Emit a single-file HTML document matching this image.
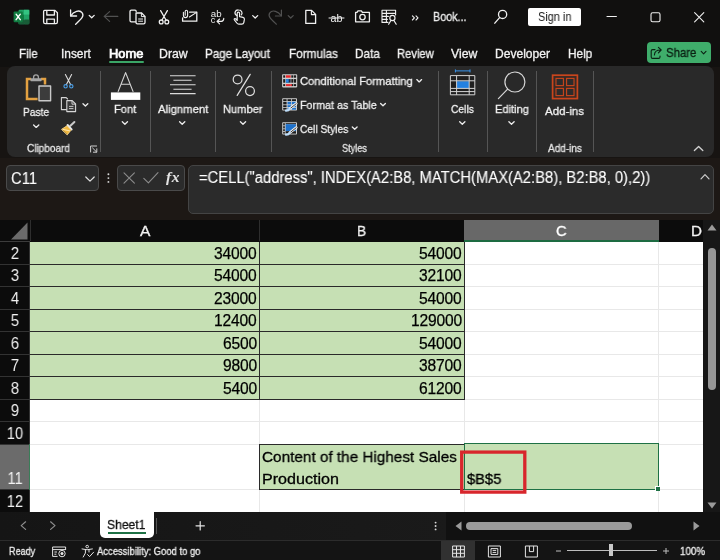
<!DOCTYPE html>
<html><head><meta charset="utf-8"><title>Excel</title>
<style>
*{box-sizing:border-box;margin:0;padding:0}
html,body{width:720px;height:560px;overflow:hidden;background:#171412;font-family:"Liberation Sans",sans-serif;color:#fff}
.a{position:absolute}
.t{position:absolute;white-space:nowrap;line-height:1;will-change:transform}
.tx{transform-origin:0 50%;-webkit-text-stroke:0.3px currentColor}
svg{position:absolute;overflow:visible}
#title{left:0;top:0;width:720px;height:67px;background:#11100f}
#ribbon{left:6.8px;top:66.4px;width:707.2px;height:91px;background:#292929;border-radius:8px}
#fbar{left:0;top:158px;width:720px;height:62px;background:#1d1815}
.sep{position:absolute;width:1px;background:#555;top:71px;height:81px}
.rh{position:absolute;left:0;width:30px;background:#0c0c0c;border-bottom:1px solid #333;border-right:1px solid #333}
.rn{left:0;width:30px;text-align:center;font-size:16px;color:#f2f2f2;transform:scaleX(.915)}
.gc{background:#c6e0b4;border-right:1px solid #2a2a2a;border-bottom:1px solid #2a2a2a}
.nm{font-size:15.6px;color:#000;letter-spacing:-0.15px;-webkit-text-stroke:0.25px #000}
</style></head><body>
<div class="a" id="title"></div>
<div class="a" id="ribbon"></div>
<div class="a" id="fbar"></div>

<!-- title bar widgets -->
<div class="a" style="left:528px;top:8px;width:53px;height:18px;background:#fff;border-radius:2px"></div>
<div class="a" style="left:109px;top:61.4px;width:34.6px;height:2px;background:#3aa566;border-radius:1px"></div>
<div class="a" style="left:647px;top:41.5px;width:63.6px;height:21.6px;background:#3fad6b;border-radius:4px"></div>

<!-- ribbon separators -->
<div class="sep" style="left:100px"></div>
<div class="sep" style="left:150px"></div>
<div class="sep" style="left:215px"></div>
<div class="sep" style="left:271px"></div>
<div class="sep" style="left:438px"></div>
<div class="sep" style="left:487px"></div>
<div class="sep" style="left:536px"></div>
<div class="sep" style="left:593px"></div>

<!-- formula bar boxes -->
<div class="a" style="left:6px;top:165px;width:93px;height:26px;background:#2b2b2b;border:1px solid #4a4a4a;border-radius:4px"></div>
<div class="a" style="left:117px;top:165px;width:68px;height:26px;background:#2b2b2b;border:1px solid #4a4a4a;border-radius:4px"></div>
<div class="a" style="left:188px;top:165px;width:526px;height:48.6px;background:#2b2b2b;border:1px solid #444;border-radius:5px"></div>
<div class="t" style="left:166.4px;top:169.4px;font-size:15.5px;color:#e4e4e4;font-family:'Liberation Serif',serif;font-style:italic;font-weight:bold;letter-spacing:0.6px">fx</div>

<!-- grid -->
<div class="a" style="left:0;top:220px;width:720px;height:292px;background:#fff"></div>
<div class="a" style="left:0;top:219.5px;width:720px;height:22.5px;background:#0c0c0c"></div>
<div class="a" style="left:0;top:241px;width:30px;height:1px;background:#3c3c3c"></div>
<div class="a" style="left:30px;top:220px;width:1px;height:21px;background:#2e2e2e"></div>
<div class="a" style="left:259px;top:220px;width:1px;height:21px;background:#2e2e2e"></div>
<div class="a" style="left:464px;top:219.5px;width:194.5px;height:21px;background:#686868"></div>
<div class="a" style="left:464px;top:240.4px;width:194.5px;height:1.6px;background:#1d6b41"></div>
<svg style="left:11px;top:222px" width="17" height="18"><path d="M16.5 0.5 L16.5 17.5 L0 17.5Z" fill="#6b6b6b"/></svg>
<div class="rh" style="top:242px;height:23px;background:#0c0c0c"></div>
<div class="t rn" style="top:245.5px">2</div>
<div class="rh" style="top:265px;height:22px;background:#0c0c0c"></div>
<div class="t rn" style="top:267.5px">3</div>
<div class="rh" style="top:287px;height:23px;background:#0c0c0c"></div>
<div class="t rn" style="top:290.5px">4</div>
<div class="rh" style="top:310px;height:22px;background:#0c0c0c"></div>
<div class="t rn" style="top:312.5px">5</div>
<div class="rh" style="top:332px;height:23px;background:#0c0c0c"></div>
<div class="t rn" style="top:335.5px">6</div>
<div class="rh" style="top:355px;height:22px;background:#0c0c0c"></div>
<div class="t rn" style="top:357.5px">7</div>
<div class="rh" style="top:377px;height:23px;background:#0c0c0c"></div>
<div class="t rn" style="top:380.5px">8</div>
<div class="rh" style="top:400px;height:22px;background:#0c0c0c"></div>
<div class="t rn" style="top:402.5px">9</div>
<div class="rh" style="top:422px;height:23px;background:#0c0c0c"></div>
<div class="t rn" style="top:425.5px">10</div>
<div class="rh" style="top:445px;height:45px;background:#6b6b6b"></div>
<div class="t rn" style="top:470.5px">11</div>
<div class="rh" style="top:490px;height:23px;background:#0c0c0c"></div>
<div class="t rn" style="top:493.5px">12</div>
<div class="a" style="left:30px;top:264px;width:673px;height:1px;background:#e8e8e8"></div>
<div class="a" style="left:30px;top:286px;width:673px;height:1px;background:#e8e8e8"></div>
<div class="a" style="left:30px;top:309px;width:673px;height:1px;background:#e8e8e8"></div>
<div class="a" style="left:30px;top:331px;width:673px;height:1px;background:#e8e8e8"></div>
<div class="a" style="left:30px;top:354px;width:673px;height:1px;background:#e8e8e8"></div>
<div class="a" style="left:30px;top:376px;width:673px;height:1px;background:#e8e8e8"></div>
<div class="a" style="left:30px;top:399px;width:673px;height:1px;background:#e8e8e8"></div>
<div class="a" style="left:30px;top:421px;width:673px;height:1px;background:#e8e8e8"></div>
<div class="a" style="left:30px;top:444px;width:673px;height:1px;background:#e8e8e8"></div>
<div class="a" style="left:30px;top:489px;width:673px;height:1px;background:#e8e8e8"></div>
<div class="a" style="left:259px;top:242px;width:1px;height:270px;background:#e8e8e8"></div>
<div class="a" style="left:464px;top:242px;width:1px;height:270px;background:#e8e8e8"></div>
<div class="a" style="left:658px;top:242px;width:1px;height:270px;background:#e8e8e8"></div>
<div class="a gc" style="left:30px;top:242px;width:230px;height:23px"></div>
<div class="a gc" style="left:260px;top:242px;width:205px;height:23px"></div>
<div class="t nm" style="right:463.2px;top:245.6px">34000</div>
<div class="t nm" style="right:258.2px;top:245.6px">54000</div>
<div class="a gc" style="left:30px;top:265px;width:230px;height:22px"></div>
<div class="a gc" style="left:260px;top:265px;width:205px;height:22px"></div>
<div class="t nm" style="right:463.2px;top:267.6px">54000</div>
<div class="t nm" style="right:258.2px;top:267.6px">32100</div>
<div class="a gc" style="left:30px;top:287px;width:230px;height:23px"></div>
<div class="a gc" style="left:260px;top:287px;width:205px;height:23px"></div>
<div class="t nm" style="right:463.2px;top:290.6px">23000</div>
<div class="t nm" style="right:258.2px;top:290.6px">54000</div>
<div class="a gc" style="left:30px;top:310px;width:230px;height:22px"></div>
<div class="a gc" style="left:260px;top:310px;width:205px;height:22px"></div>
<div class="t nm" style="right:463.2px;top:312.6px">12400</div>
<div class="t nm" style="right:258.2px;top:312.6px">129000</div>
<div class="a gc" style="left:30px;top:332px;width:230px;height:23px"></div>
<div class="a gc" style="left:260px;top:332px;width:205px;height:23px"></div>
<div class="t nm" style="right:463.2px;top:335.6px">6500</div>
<div class="t nm" style="right:258.2px;top:335.6px">54000</div>
<div class="a gc" style="left:30px;top:355px;width:230px;height:22px"></div>
<div class="a gc" style="left:260px;top:355px;width:205px;height:22px"></div>
<div class="t nm" style="right:463.2px;top:357.6px">9800</div>
<div class="t nm" style="right:258.2px;top:357.6px">38700</div>
<div class="a gc" style="left:30px;top:377px;width:230px;height:23px"></div>
<div class="a gc" style="left:260px;top:377px;width:205px;height:23px"></div>
<div class="t nm" style="right:463.2px;top:380.6px">5400</div>
<div class="t nm" style="right:258.2px;top:380.6px">61200</div>
<!-- row 11 cells -->
<div class="a" style="left:259px;top:444px;width:206px;height:46px;background:#c6e0b4;border:1px solid #2a2a2a"></div>
<div class="a" style="left:464px;top:443px;width:195px;height:47px;background:#c6e0b4;border:1px solid #1e7145"></div>
<div class="a" style="left:655px;top:486px;width:5px;height:5px;background:#1e7145;border:1px solid #fff;border-right:0;border-bottom:0"></div>
<svg style="left:0;top:0" width="720" height="560"><rect x="461.7" y="452.1" width="63.1" height="40" fill="none" stroke="#d8262c" stroke-width="3.3"/></svg>
<div class="a" style="left:29px;top:444px;width:1px;height:46px;background:#3a7d58"></div>
<!-- right scrollbar -->
<div class="a" style="left:703px;top:220px;width:17px;height:292px;background:#171717"></div>
<div class="a" style="left:708px;top:248px;width:8px;height:142px;background:#969696;border-radius:4px"></div>
<svg style="left:707px;top:224px" width="10" height="7"><path d="M0.5 6.5 L5 0.5 L9.5 6.5Z" fill="#9a9a9a"/></svg>
<svg style="left:707px;top:502px" width="10" height="7"><path d="M0.5 0.5 L5 6.5 L9.5 0.5Z" fill="#9a9a9a"/></svg>

<!-- bottom bars -->
<div class="a" style="left:0;top:512px;width:720px;height:28px;background:linear-gradient(to right,#151515,#1d1d1d)"></div>
<div class="a" style="left:0;top:540px;width:720px;height:20px;background:#141414;border-top:1px solid #2c2c2c"></div>
<div class="a" style="left:100px;top:512px;width:53.6px;height:25.8px;background:#fff;border-radius:0 0 5px 5px"></div>
<div class="a" style="left:108px;top:532px;width:38px;height:2px;background:#1e7145"></div>
<div class="a" style="left:156px;top:518px;width:1px;height:16px;background:#555"></div>
<!-- h scrollbar -->
<div class="a" style="left:446px;top:512px;width:274px;height:28px;background:#111"></div>
<div class="a" style="left:466px;top:522px;width:166px;height:8.4px;background:#9a9a9a;border-radius:4.2px"></div>
<svg style="left:455px;top:521px" width="7" height="10"><path d="M6.5 0.5 L0.5 5 L6.5 9.5Z" fill="#9a9a9a"/></svg>
<svg style="left:693px;top:521px" width="7" height="10"><path d="M0.5 0.5 L6.5 5 L0.5 9.5Z" fill="#9a9a9a"/></svg>
<!-- view buttons / zoom -->
<div class="a" style="left:441px;top:540px;width:34px;height:19px;top:541px;background:#313131"></div>
<div class="a" style="left:567px;top:550px;width:90px;height:1px;background:#bdbdbd"></div>
<div class="a" style="left:609px;top:544px;width:4px;height:12px;background:#c8c8c8"></div>
<svg style="left:0;top:0" width="720" height="560" viewBox="0 0 720 560" fill="none" stroke-linecap="round" stroke-linejoin="round">
<!-- ===== Title bar (QAT) ===== -->
<g id="xl">
<rect x="18.5" y="9.8" width="10.8" height="14.4" rx="1.2" fill="#21a366" stroke="none"/>
<rect x="24" y="9.8" width="5.3" height="4.8" fill="#33c481" stroke="none"/>
<rect x="18.5" y="14.6" width="5.5" height="4.8" fill="#107c41" stroke="none"/>
<rect x="24" y="19.4" width="5.3" height="4.8" rx="1" fill="#185c37" stroke="none"/>
<rect x="18.5" y="19.4" width="5.5" height="4.8" fill="#185c37" stroke="none"/>
<rect x="13.6" y="11.6" width="9.2" height="10.6" rx="1" fill="#107c41" stroke="none"/>
<path d="M16.1 14.2 L20.3 19.7 M20.3 14.2 L16.1 19.7" stroke="#fff" stroke-width="1.4"/>
</g>
<g stroke="#f0f0f0" stroke-width="1.3">
<!-- save -->
<path d="M44.6 10.4 H55 L57.4 12.8 V22 Q57.4 23.6 55.8 23.6 H45.2 Q43.6 23.6 43.6 22 V11.4 Q43.6 10.4 44.6 10.4Z"/>
<path d="M46.8 10.6 V15 H54.4 V10.6"/>
<path d="M46.8 23.4 V19.2 H54.4 V23.4"/>
<!-- undo -->
<path d="M70.6 10 V16 H76.6"/>
<path d="M70.8 15.8 C73.5 11.5 79.5 9.2 82.2 12.8 C84.6 16.2 81 19.2 75.6 24.2"/>
<path d="M89.2 15.4 L91.7 17.8 L94.2 15.4"/>
<!-- copy -->
<path d="M135.6 21.8 H131.4 Q130 21.8 130 20.4 V11.6 Q130 10.2 131.4 10.2 H135 Q136.2 10.2 136.2 11.6"/>
<path d="M136 13 H141.6 L145 16.4 V22.4 Q145 23.8 143.6 23.8 H137.4 Q136 23.8 136 22.4Z"/>
<path d="M141.4 13.2 V16.6 H144.8" stroke-width="1"/>
<path d="M138.6 19 H142.6 M138.6 21.2 H142.6" stroke-width="1"/>
<!-- scissors -->
<path d="M160.6 10.6 L166 20 M167.4 10.6 L162 20"/>
<circle cx="161.2" cy="21.9" r="1.9"/><circle cx="166.8" cy="21.9" r="1.9"/>
<!-- mail attach -->
<path d="M189.6 12.2 H196.8 V21.2 H182.6 V18"/>
<path d="M189.4 17 L196.6 12.4" stroke-width="1.1"/>
<path d="M183.4 12.2 V15.6 Q183.4 17.6 185.4 17.6 Q187.6 17.6 187.6 15.6 V11.6 Q187.6 10.2 186.3 10.2 Q185.2 10.2 185.2 11.6 V15.2" stroke-width="1.1"/>
<!-- touch -->
<path d="M236.8 15.6 C233.6 13.6 235 9.8 238.4 9.9 C241.8 9.9 242.8 13 241.4 14.8" stroke-width="1.2"/>
<path d="M237.2 20.4 V13.4 Q237.2 12.2 238.4 12.2 Q239.6 12.2 239.6 13.4 V16.6 L243 17.4 Q244.6 17.8 244.4 19.4 L243.8 22.6 Q243.4 24.2 241.8 24.2 H238.8 Q237.6 24.2 236.8 23 L234.4 19.8 Q233.8 18.8 235 18.6 Q236 18.6 237.2 20.4" stroke-width="1.2"/>
<path d="M252.7 15.6 L255.2 18 L257.7 15.6"/>
<!-- new doc -->
<path d="M305.8 10.4 H311.6 L315.6 14.4 V23.4 H305.8Z"/>
<path d="M311.4 10.6 V14.6 H315.4" stroke-width="1.1"/>
<!-- camera -->
<path d="M355.6 12.4 H357 L358 10.8 H361.4 L362.4 12.4 H369.4 V21.8 H355.6Z"/>
<circle cx="362.5" cy="17.1" r="2.7"/>
<!-- table search -->
<path d="M382 10.2 H395.6 V15 M382 10.2 V22.4 H388 M382 13.4 H395.6 M382 16.4 H388.4 M382 19.4 H387.4 M386.4 10.4 V22.2" stroke-width="1.1"/>
<circle cx="392.4" cy="18" r="2.6" stroke-width="1.2"/>
<path d="M388.6 24.2 L390.6 21 M396.2 24.2 L394.2 21" stroke-width="1.2"/>
<!-- overflow -->
<path d="M412.4 15.8 L414.4 17.9 L412.4 20 M416 15.8 L418 17.9 L416 20" stroke-width="1.1"/>
<!-- search -->
<circle cx="502.6" cy="14.4" r="4.1"/>
<path d="M499.6 17.6 L494.8 23.2"/>
<!-- window controls -->
<path d="M607 16.5 H616.4" stroke-width="1.1"/>
<rect x="651" y="12.8" width="9" height="9" rx="1.6" stroke-width="1.1"/>
<path d="M694.6 12.6 L703.8 21.8 M703.8 12.6 L694.6 21.8" stroke-width="1.1"/>
</g>
<!-- ab replace / strike -->
<g stroke="none" fill="#f0f0f0" font-family="Liberation Sans, sans-serif">
<text x="210.8" y="16.8" font-size="8.6" textLength="10.8" lengthAdjust="spacingAndGlyphs">ab</text>
<text x="210.8" y="23.4" font-size="8.6" textLength="4.6" lengthAdjust="spacingAndGlyphs">c</text>
<text x="330.4" y="22" font-size="11.5" textLength="12" lengthAdjust="spacingAndGlyphs">ab</text>
</g>
<g stroke="#f0f0f0" stroke-width="1.1">
<path d="M217.2 21.4 H221.4 Q223.6 21.2 223.8 18.4 M219.6 19 L217 21.4 L219.6 23.8"/>
<path d="M329 18 H344" stroke-width="1"/>
</g>
<!-- dim icons -->
<g stroke="#515151" stroke-width="1.2">
<path d="M104.2 16.4 H117.8 M109.6 11.6 L104.2 16.4 L109.6 21.4"/>
<path d="M281.4 10 V16 H275.4"/>
<path d="M281.2 15.8 C278.5 11.5 272.5 9.2 269.8 12.8 C267.4 16.2 271 19.2 276.4 24.2"/>
<path d="M288.2 15.6 L290.7 18 L293.2 15.6"/>
</g>
<!-- share icon -->
<g stroke="#0b2013" stroke-width="1.1">
<path d="M655 49.6 H652.6 Q651.2 49.6 651.2 51 V57 Q651.2 58.4 652.6 58.4 H658.6 Q660 58.4 660 57 V56"/>
<path d="M654.4 55 C654.6 51.6 657 50 660.4 50 M658.4 47.4 L661.2 50 L658.4 52.8"/>
<path d="M701.2 51.4 L703.6 53.8 L706 51.4"/>
</g>

<!-- ===== Ribbon icons ===== -->
<!-- paste -->
<g>
<path d="M31 79 H27 V99 H37.6" stroke="#e3a141" stroke-width="2.5" stroke-linecap="butt" stroke-linejoin="miter"/>
<path d="M41 79 H45 V84.4" stroke="#e3a141" stroke-width="2.5" stroke-linecap="butt" stroke-linejoin="miter"/>
<rect x="30.4" y="78.2" width="11.2" height="3" rx="0.6" fill="#a6a6a6"/><path d="M33.6 78.4 V77.2 Q33.6 74.8 36 74.8 Q38.4 74.8 38.4 77.2 V78.4" stroke="#a6a6a6" stroke-width="1.3"/>
<rect x="39" y="86" width="11.6" height="14.8" fill="#3c3c3c" stroke="#c9c9c9" stroke-width="1.4"/>
</g>
<g stroke="#ececec" stroke-width="1.35">
<path d="M33.6 125 L36.2 127.4 L38.8 125"/>
<path d="M122.3 121.8 L124.9 124.2 L127.5 121.8"/>
<path d="M179.6 121.8 L182.2 124.2 L184.8 121.8"/>
<path d="M240.4 121.8 L243 124.2 L245.6 121.8"/>
<path d="M459.7 121.8 L462.3 124.2 L464.9 121.8"/>
<path d="M508.9 121.8 L511.5 124.2 L514.1 121.8"/>
<path d="M83 103.8 L85.4 106.1 L87.8 103.8"/>
<path d="M416.8 79.6 L419.2 81.9 L421.6 79.6"/>
<path d="M380.6 103.4 L383 105.7 L385.4 103.4"/>
<path d="M352.3 127 L354.7 129.3 L357.1 127"/>
<path d="M694.4 150.6 L698.6 146.4 L702.8 150.6" stroke="#cfcfcf"/>
</g>
<!-- ribbon scissors -->
<g stroke-width="1.1">
<path d="M65.4 74.6 L70.6 84.6 M71.6 74.6 L66.4 84.6" stroke="#dcdcdc"/>
<circle cx="65.6" cy="86.3" r="1.7" stroke="#4a9ee6"/><circle cx="71.3" cy="86.3" r="1.7" stroke="#4a9ee6"/>
</g>
<!-- ribbon copy -->
<g stroke="#d6d6d6" stroke-width="1.1">
<path d="M66.6 109.6 H61.4 V97.6 H66.2 L67.6 99"/>
<path d="M66.8 100.6 H72.2 L75.6 104 V111.6 H66.8Z" fill="#3a3a3a"/>
<path d="M72 100.8 V104.2 H75.4" stroke-width="0.9"/>
<path d="M69.4 106.4 H73 M69.4 108.6 H73" stroke-width="0.9"/>
</g>
<!-- format painter -->
<g>
<path d="M70.4 125.8 L74.4 122" stroke="#c9c9c9" stroke-width="2"/>
<path d="M67.6 125 L71.6 129.4" stroke="#e6e6e6" stroke-width="2"/>
<path d="M61.8 129.2 L67 125.8 L71 130.2 L67.4 134.6Z" fill="#f2b93f" stroke="#f7d68a" stroke-width="0.9"/>
<path d="M63 129.4 L69.6 130.8" stroke="#fff3d0" stroke-width="0.8"/>
</g>
<!-- dialog launcher -->
<g stroke="#cfcfcf" stroke-width="1">
<path d="M96.6 146 H90.6 V152"/>
<path d="M92.6 148 L96.6 152 M96.8 148.8 V152.2 H93.4"/>
</g>
<!-- font -->
<g>
<path d="M118.2 91.4 L125.6 72.6 L133 91.4 M121.2 84.2 H130" stroke="#d4d4d4" stroke-width="1.15"/>
<rect x="110.9" y="92.4" width="29.4" height="7.5" fill="#fff"/>
</g>
<!-- alignment -->
<g stroke="#dadada" stroke-width="1.05" stroke-linecap="butt">
<path d="M170 75.8 H195.6 M173.4 80.2 H191.6 M170 84.7 H195.6 M173.4 89.2 H191.6 M170 93.6 H195.6"/>
</g>
<!-- percent -->
<g stroke="#dddddd" stroke-width="1.25">
<circle cx="237.6" cy="79.4" r="4.4"/><circle cx="250" cy="91.1" r="4.4"/>
<path d="M250.2 74.4 L237.2 95.4"/>
</g>
<!-- conditional formatting -->
<g stroke="none">
<rect x="282.1" y="74.2" width="15.1" height="13.2" rx="0.8" fill="#cfcfcf"/>
<rect x="283.2" y="75.3" width="1.9" height="2.4" fill="#1c1c1c"/>
<rect x="285.8" y="75.3" width="4.9" height="2.4" fill="#e8282c"/>
<rect x="291.3" y="75.3" width="2.0" height="2.4" fill="#1c1c1c"/>
<rect x="293.9" y="75.3" width="2.2" height="2.4" fill="#1c1c1c"/>
<rect x="283.2" y="79.1" width="1.9" height="3.6" fill="#1c1c1c"/>
<rect x="285.8" y="79.1" width="4.9" height="3.6" fill="#1f2a44"/>
<rect x="291.3" y="79.1" width="2.0" height="3.6" fill="#1c1c1c"/>
<rect x="293.9" y="79.1" width="2.2" height="3.6" fill="#1c1c1c"/>
<rect x="283.2" y="84.1" width="1.9" height="2.0" fill="#1c1c1c"/>
<rect x="285.8" y="84.1" width="4.9" height="2.0" fill="#e8282c"/>
<rect x="291.3" y="84.1" width="2.0" height="2.0" fill="#1c1c1c"/>
<rect x="293.9" y="84.1" width="2.2" height="2.0" fill="#1c1c1c"/>
<rect x="285.8" y="79.1" width="2.9" height="3.6" fill="#2a86e0"/>
<rect x="290.7" y="84.1" width="1.2" height="2" fill="#e8282c"/>
</g>
<!-- format as table -->
<g stroke="none">
<rect x="282.2" y="98.2" width="14.8" height="12.4" rx="0.8" fill="#cfcfcf"/>
<rect x="283.2" y="99.2" width="3.4" height="1.8" fill="#1c1c1c"/>
<rect x="287.5" y="99.2" width="3.7" height="1.8" fill="#1c1c1c"/>
<rect x="292" y="99.2" width="4.0" height="1.8" fill="#1c1c1c"/>
<rect x="283.2" y="101.8" width="3.4" height="2.6" fill="#1c1c1c"/>
<rect x="287.5" y="101.8" width="3.7" height="2.6" fill="#1f72cc"/>
<rect x="292" y="101.8" width="4.0" height="2.6" fill="#1f72cc"/>
<rect x="283.2" y="105.2" width="3.4" height="2.0" fill="#1c1c1c"/>
<rect x="287.5" y="105.2" width="3.7" height="2.0" fill="#1f72cc"/>
<rect x="292" y="105.2" width="4.0" height="2.0" fill="#1f72cc"/>
<rect x="283.2" y="108" width="3.4" height="1.7" fill="#1c1c1c"/>
<rect x="287.5" y="108" width="3.7" height="1.7" fill="#1f72cc"/>
<rect x="292" y="108" width="4.0" height="1.7" fill="#1f72cc"/>
</g>
<path d="M296.3 103.6 L290 108.6" stroke="#f2f2f2" stroke-width="2.6" stroke-linecap="round"/>
<path d="M296.1 103.8 L290.6 108.2" stroke="#2a2a2a" stroke-width="0.9" stroke-linecap="round"/>
<path d="M289.6 108.8 Q288.6 110.8 286 110.7" stroke="#bcdcf8" stroke-width="2.2" stroke-linecap="round"/>
<!-- cell styles -->
<g stroke="none">
<rect x="282.2" y="122.2" width="14.8" height="12.4" rx="0.8" fill="#cfcfcf"/>
<rect x="283.2" y="123.2" width="1.6" height="2.2" fill="#1c1c1c"/>
<rect x="283.2" y="126.2" width="1.6" height="2.2" fill="#1c1c1c"/>
<rect x="283.2" y="129.2" width="1.6" height="2.0" fill="#1c1c1c"/>
<rect x="283.2" y="132" width="1.6" height="1.6" fill="#1c1c1c"/>
<rect x="285.6" y="123.2" width="10.4" height="1" fill="#1c1c1c"/>
<rect x="285.6" y="124.2" width="10.4" height="7" fill="#1f72cc"/>
<rect x="285.6" y="131.2" width="10.4" height="2.4" fill="#1c1c1c"/>
</g>
<path d="M296.3 127.6 L290 132.6" stroke="#f2f2f2" stroke-width="2.6" stroke-linecap="round"/>
<path d="M296.1 127.8 L290.6 132.2" stroke="#2a2a2a" stroke-width="0.9" stroke-linecap="round"/>
<path d="M289.6 132.8 Q288.6 134.8 286 134.7" stroke="#bcdcf8" stroke-width="2.2" stroke-linecap="round"/>
<!-- cells -->
<g stroke-linecap="butt" stroke-linejoin="miter">
<rect x="456.8" y="81.2" width="12.2" height="7" fill="#2481e0"/>
<path d="M450.4 75.6 H474.8 V94.8 H450.4Z" fill="#1f1f1f" stroke="none"/>
<rect x="456.8" y="81.2" width="12.2" height="7" fill="#2481e0"/>
<path d="M450.4 75.6 H474.8 V94.8 H450.4Z M450.4 80.8 H474.8 M450.4 88.4 H474.8 M450.4 91.6 H474.8 M456.6 75.6 V94.8 M469.2 75.6 V94.8" stroke="#d4d4d4" stroke-width="1"/>
<path d="M455.4 70.9 H470 M455.4 69.4 V72.4 M470 69.4 V72.4" stroke="#3a94ea" stroke-width="1"/>
</g>
<!-- editing -->
<g stroke="#d6d6d6" stroke-width="1.2">
<circle cx="514.9" cy="82" r="10"/>
<path d="M507.6 89.2 L498.4 98.6"/>
</g>
<!-- add-ins -->
<g stroke="#c9461d" stroke-linecap="butt" stroke-linejoin="miter">
<rect x="552.6" y="75.2" width="24.8" height="23.4" stroke-width="1.7" fill="#3a2a24"/>
<rect x="556" y="78.4" width="7.4" height="7.2" stroke-width="1.1" fill="#2c2c2c"/>
<rect x="566.6" y="78.4" width="7.4" height="7.2" stroke-width="1.1" fill="#2c2c2c"/>
<rect x="556" y="88.4" width="7.4" height="7.2" stroke-width="1.1" fill="#2c2c2c"/>
<rect x="566.6" y="88.4" width="7.4" height="7.2" stroke-width="1.1" fill="#2c2c2c"/>
</g>

<!-- ===== Formula bar icons ===== -->
<g stroke="#e0e0e0" stroke-width="1.2">
<path d="M85.8 177 L90 181.2 L94.2 177"/>
<path d="M701 178.8 L705 174.6 L709 178.8" stroke="#cfcfcf"/>
</g>
<g fill="#d8d8d8" stroke="none">
<circle cx="108.4" cy="174.3" r="0.95"/><circle cx="108.4" cy="178.1" r="0.95"/><circle cx="108.4" cy="181.9" r="0.95"/>
</g>
<g stroke="#8c8c8c" stroke-width="1.1">
<path d="M124 172.8 L134.4 183.2 M134.4 172.8 L124 183.2"/>
<path d="M143.8 178.4 L148.4 182.8 L158 172.6"/>
</g>
<!-- ===== Sheet tab bar ===== -->
<g stroke="#8e8e8e" stroke-width="1.2">
<path d="M25.6 521.8 L21.2 525.6 L25.6 529.4"/>
<path d="M50.6 521.8 L55 525.6 L50.6 529.4"/>
</g>
<g stroke="#e4e4e4" stroke-width="1.2">
<path d="M196 525.8 H204.4 M200.2 521.6 V530"/>
</g>
<g fill="#d8d8d8" stroke="none">
<circle cx="435.6" cy="522.6" r="0.95"/><circle cx="435.6" cy="526" r="0.95"/><circle cx="435.6" cy="529.4" r="0.95"/>
</g>
<!-- ===== Status bar icons ===== -->
<g stroke="#e4e4e4" stroke-width="1" stroke-linecap="butt" stroke-linejoin="miter">
<path d="M52.6 547 H65.6 V550 M52.6 547 V556.4 H57.6 M52.6 549.6 H65.6 M54.4 552 H57 M54.4 554.2 H56.4"/>
<circle cx="62" cy="553.6" r="3.2"/><circle cx="62" cy="553.6" r="1.1" fill="#e4e4e4"/>
<!-- accessibility -->
<circle cx="87.2" cy="546.6" r="1.3"/>
<path d="M82 549 Q87 550.6 92.4 549 M85.4 549.8 V553 L83.2 557 M89 549.8 V552" stroke-linecap="round" stroke-linejoin="round"/>
<path d="M87.6 554.6 L89.6 556.6 L93.6 552.2" stroke-linecap="round" stroke-linejoin="round"/>
<!-- views -->
<path d="M452.6 546 H464.4 V557 H452.6Z M452.6 549.7 H464.4 M452.6 553.3 H464.4 M456.5 546 V557 M460.5 546 V557"/>
<path d="M488.4 546 H500.4 V557 H488.4Z M491 548.6 H497.8 V554.4 H491Z M492.6 550.4 H496.2 M492.6 552.4 H496.2"/>
<path d="M525.4 546 H537.4 V557 H525.4Z M529.4 546 V551.6 H533.6 V546" />
<path d="M556 551 H561 M663 551 H669 M666 548 V554" stroke="#bdbdbd"/>
</g>
</svg>

<div class="t tx" style="left:433.1px;top:11.0px;font-size:12.2px;color:#ececec;transform:scaleX(0.8830)">Book...</div>
<div class="t tx" style="left:537.9px;top:11.1px;font-size:12.2px;color:#161616;-webkit-text-stroke:0;transform:scaleX(0.8990)">Sign in</div>
<div class="t tx" style="left:18.8px;top:48.7px;font-size:11.9px;color:#f2f2f2;transform:scaleX(0.9754)">File</div>
<div class="t tx" style="left:61.3px;top:48.7px;font-size:11.9px;color:#f2f2f2;transform:scaleX(0.9849)">Insert</div>
<div class="t tx" style="left:108.9px;top:48.7px;font-size:11.9px;color:#ffffff;-webkit-text-stroke:0.7px #fff;transform:scaleX(1.0814)">Home</div>
<div class="t tx" style="left:159.4px;top:48.7px;font-size:11.9px;color:#f2f2f2;transform:scaleX(1.0342)">Draw</div>
<div class="t tx" style="left:205.1px;top:48.7px;font-size:11.9px;color:#f2f2f2;transform:scaleX(0.9733)">Page Layout</div>
<div class="t tx" style="left:288.6px;top:48.7px;font-size:11.9px;color:#f2f2f2;transform:scaleX(0.9887)">Formulas</div>
<div class="t tx" style="left:355.1px;top:48.7px;font-size:11.9px;color:#f2f2f2;transform:scaleX(0.9871)">Data</div>
<div class="t tx" style="left:396.9px;top:48.7px;font-size:11.9px;color:#f2f2f2;transform:scaleX(0.9410)">Review</div>
<div class="t tx" style="left:451.1px;top:48.7px;font-size:11.9px;color:#f2f2f2;transform:scaleX(1.0289)">View</div>
<div class="t tx" style="left:494.9px;top:48.7px;font-size:11.9px;color:#f2f2f2;transform:scaleX(1.0147)">Developer</div>
<div class="t tx" style="left:568.1px;top:48.7px;font-size:11.9px;color:#f2f2f2;transform:scaleX(0.9931)">Help</div>
<div class="t tx" style="left:665.8px;top:47.3px;font-size:12.2px;color:#0b2013;transform:scaleX(0.9314)">Share</div>
<div class="t tx" style="left:23.4px;top:105.8px;font-size:11.6px;color:#f2f2f2;transform:scaleX(0.8801)">Paste</div>
<div class="t tx" style="left:114.3px;top:103.1px;font-size:11.6px;color:#f2f2f2;transform:scaleX(0.9611)">Font</div>
<div class="t tx" style="left:157.6px;top:103.1px;font-size:11.6px;color:#f2f2f2;transform:scaleX(0.9755)">Alignment</div>
<div class="t tx" style="left:223.2px;top:103.1px;font-size:11.6px;color:#f2f2f2;transform:scaleX(0.9600)">Number</div>
<div class="t tx" style="left:300.1px;top:75.3px;font-size:11.6px;color:#f2f2f2;transform:scaleX(0.9662)">Conditional Formatting</div>
<div class="t tx" style="left:300.1px;top:99.1px;font-size:11.6px;color:#f2f2f2;transform:scaleX(0.9250)">Format as Table</div>
<div class="t tx" style="left:300.1px;top:122.6px;font-size:11.6px;color:#f2f2f2;transform:scaleX(0.8819)">Cell Styles</div>
<div class="t tx" style="left:451.0px;top:103.1px;font-size:11.6px;color:#f2f2f2;transform:scaleX(0.8882)">Cells</div>
<div class="t tx" style="left:494.5px;top:103.1px;font-size:11.6px;color:#f2f2f2;transform:scaleX(0.9562)">Editing</div>
<div class="t tx" style="left:545.4px;top:105.3px;font-size:11.6px;color:#f2f2f2;transform:scaleX(0.9921)">Add-ins</div>
<div class="t tx" style="left:26.6px;top:144.0px;font-size:10.4px;color:#e4e4e4;transform:scaleX(0.9644)">Clipboard</div>
<div class="t tx" style="left:341.6px;top:144.0px;font-size:10.4px;color:#e4e4e4;transform:scaleX(0.8835)">Styles</div>
<div class="t tx" style="left:547.8px;top:144.0px;font-size:10.4px;color:#e4e4e4;transform:scaleX(0.9621)">Add-ins</div>
<div class="t tx" style="left:10.6px;top:170.3px;font-size:16.2px;color:#ffffff;-webkit-text-stroke:0.1px #fff;transform:scaleX(0.9123)">C11</div>
<div class="t tx" style="left:199.4px;top:170.0px;font-size:15.6px;color:#ffffff;-webkit-text-stroke:0.12px #fff;transform:scaleX(0.9485)">=CELL(&quot;address&quot;, INDEX(A2:B8, MATCH(MAX(A2:B8), B2:B8, 0),2))</div>
<div class="t tx" style="left:139.7px;top:223.3px;font-size:15.2px;color:#f2f2f2;transform:scaleX(1.0256)">A</div>
<div class="t tx" style="left:357.4px;top:223.3px;font-size:15.2px;color:#f2f2f2;transform:scaleX(0.9072)">B</div>
<div class="t tx" style="left:555.8px;top:223.3px;font-size:15.2px;color:#ffffff;transform:scaleX(0.9664)">C</div>
<div class="t tx" style="left:690.6px;top:223.3px;font-size:15.2px;color:#f2f2f2;transform:scaleX(0.9846)">D</div>
<div class="t tx" style="left:261.8px;top:448.6px;font-size:15.4px;color:#000;transform:scaleX(0.9942)">Content of the Highest Sales</div>
<div class="t tx" style="left:262.2px;top:470.8px;font-size:15.4px;color:#000;transform:scaleX(1.0463)">Production</div>
<div class="t tx" style="left:467.4px;top:470.8px;font-size:15.4px;color:#000;transform:scaleX(0.9540)">$B$5</div>
<div class="t tx" style="left:107.3px;top:518.1px;font-size:13.4px;color:#111;transform:scaleX(0.9045)">Sheet1</div>
<div class="t tx" style="left:9.2px;top:546.3px;font-size:10.6px;color:#ededed;transform:scaleX(0.8555)">Ready</div>
<div class="t tx" style="left:97.2px;top:546.3px;font-size:10.6px;color:#ededed;transform:scaleX(0.8922)">Accessibility: Good to go</div>
<div class="t tx" style="left:680.0px;top:546.3px;font-size:10.6px;color:#ededed;transform:scaleX(0.9222)">100%</div>
</body></html>
